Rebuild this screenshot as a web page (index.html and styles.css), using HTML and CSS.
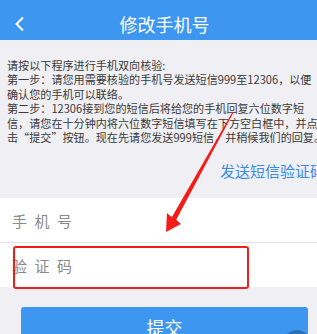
FILE: index.html
```html
<!DOCTYPE html>
<html lang="zh">
<head>
<meta charset="utf-8">
<link rel="stylesheet" href="styles.css">
</head>
<body>
<div class="page">
  <header class="topbar">
    <svg class="back" width="12" height="16" viewBox="0 0 12 16"><polyline points="9,1.5 2.5,8 9,14.5" fill="none" stroke="#fff" stroke-width="2"/></svg>
    <h1 class="title">修改手机号</h1>
  </header>
  <section class="intro">
    <p class="line">请按以下程序进行手机双向核验:</p>
    <p class="line">第一步：请您用需要核验的手机号发送短信999至12306，以便</p>
    <p class="line">确认您的手机可以联络。</p>
    <p class="line">第二步：12306接到您的短信后将给您的手机回复六位数字短</p>
    <p class="line">信，请您在十分钟内将六位数字短信填写在下方空白框中，并点</p>
    <p class="line">击“提交”按钮。现在先请您发送999短信，并稍候我们的回复。</p>
    <div class="send">发送短信验证码</div>
  </section>
  <section class="form">
    <div class="row">手机号</div>
    <div class="divider"></div>
    <div class="row">验证码</div>
  </section>
  <div class="actions">
    <button class="submit">提交</button>
  </div>
  <div class="highlight"></div>
  <svg class="arrow" width="317" height="334" viewBox="0 0 317 334"><polygon points="166,232 167,213 171.8,217.3 232.6,111.8 233.6,112.2 176.2,219.7 181,224" fill="#f41c17"/></svg>
  <div class="fab"></div>
</div>
</body>
</html>
```

FILE: styles.css
```css
* { box-sizing: border-box; }
html, body { margin: 0; padding: 0; }
body {
  width: 317px;
  height: 334px;
  overflow: hidden;
  background: #efeff4;
  font-family: "Noto Sans CJK SC", "Noto Sans", sans-serif;
}
.page {
  position: relative;
  width: 317px;
  height: 334px;
  overflow: hidden;
}
.topbar {
  height: 40px;
  background: #3d96f0;
  display: flex;
  align-items: center;
  justify-content: center;
  padding-top: 8px;
  position: relative;
}
.back {
  position: absolute;
  left: 14px;
  top: 16px;
}
.title {
  margin: 0;
  margin-left: 12px;
  font-size: 18px;
  font-weight: normal;
  color: #fff;
  line-height: 24px;
}
.intro {
  padding: 18px 0 0 7px;
  height: 158px;
}
.line {
  margin: 0;
  font-size: 11.1px;
  line-height: 14.4px;
  color: #3a3a3a;
  white-space: nowrap;
}
.send {
  margin-top: 17px;
  margin-left: 213px;
  font-size: 15px;
  line-height: 20px;
  color: #3a8de4;
  white-space: nowrap;
}
.form {
  background: #fff;
}
.row {
  height: 44px;
  display: flex;
  align-items: center;
  padding-left: 12px;
  font-size: 15px;
  letter-spacing: 7.5px;
  color: #8a8a8a;
}
.divider {
  height: 1px;
  background: #e3e3e6;
}
.actions {
  padding: 20px 9px 0 21px;
}
.submit {
  display: block;
  width: 287px;
  height: 40px;
  border: none;
  border-radius: 3px;
  background: #3d96f0;
  color: #fff;
  font-family: "Noto Sans CJK SC", "Noto Sans", sans-serif;
  font-size: 18px;
  padding: 0;
}
.highlight {
  position: absolute;
  left: 13px;
  top: 246px;
  width: 236px;
  height: 43px;
  border: 2px solid #f41c17;
  border-radius: 3px;
}
.arrow {
  position: absolute;
  left: 0;
  top: 0;
}
.fab {
  position: absolute;
  left: 284px;
  top: 330px;
  width: 26px;
  height: 26px;
  border-radius: 50%;
  background: #2c6fb5;
}
```
